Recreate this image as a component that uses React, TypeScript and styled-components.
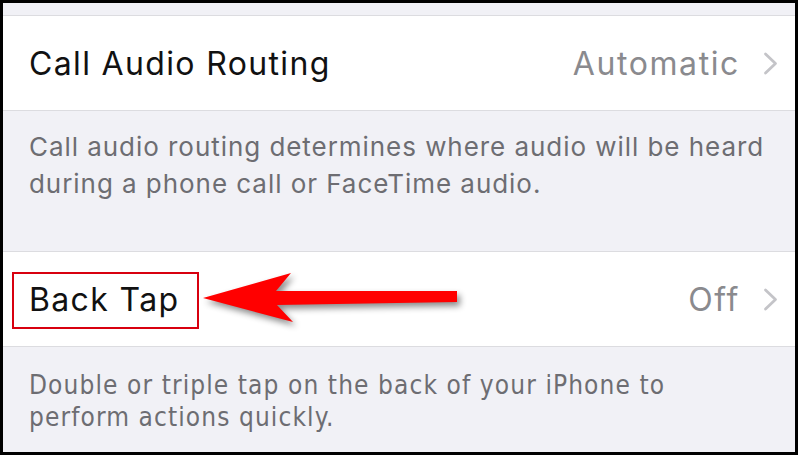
import React from 'react';
import styled, { createGlobalStyle } from 'styled-components';

const GlobalStyle = createGlobalStyle`
  html, body {
    margin: 0;
    padding: 0;
    background: #ffffff;
  }
  body {
    font-family: Inter, "Liberation Sans", sans-serif;
  }
`;

const Frame = styled.div`
  box-sizing: border-box;
  width: 798px;
  height: 455px;
  border: 3px solid #000;
  background: #f1f1f6;
  display: flex;
  flex-direction: column;
  overflow: hidden;
`;

const TopGap = styled.div`
  height: 12px;
  flex-shrink: 0;
`;

const Row = styled.div`
  position: relative;
  display: flex;
  align-items: center;
  height: 94px;
  flex-shrink: 0;
  padding: 0 17px 0 26px;
  background: #fff;
  border-top: 1px solid #dcdce0;
  border-bottom: 1px solid #dcdce0;
`;

const Label = styled.span`
  flex: 1;
  font-size: 32px;
  color: #111;
  letter-spacing: 1.35px;
`;

const Value = styled.span`
  font-size: 32px;
  color: #8a8a8e;
  letter-spacing: 1.6px;
  margin-right: 23px;
`;

const Footer = styled.div<{ narrow?: boolean }>`
  padding: ${p => (p.narrow ? '22px 10px 0 26px' : '17px 10px 0 26px')};
  height: ${p => (p.narrow ? 'auto' : '140px')};
  box-sizing: border-box;
  flex-shrink: 0;
  font-family: ${p => (p.narrow ? '"Liberation Sans Narrow", "DejaVu Sans Condensed", Roboto, sans-serif' : 'Inter, "Liberation Sans", sans-serif')};
  font-size: 26px;
  letter-spacing: ${p => (p.narrow ? '1.1px' : '0.95px')};
  line-height: ${p => (p.narrow ? '32px' : '37px')};
  color: #6d6d72;
`;

const Highlight = styled.div`
  position: absolute;
  left: 9px;
  top: 20px;
  width: 187px;
  height: 57px;
  box-sizing: border-box;
  border: 2px solid #d8000f;
  pointer-events: none;
`;

const Arrow = styled.svg`
  position: absolute;
  left: 187px;
  top: 7px;
  overflow: visible;
  filter: drop-shadow(3px 4px 3px rgba(0, 0, 0, 0.45));
`;

const Chevron = () => (
  <svg width="15" height="23" viewBox="0 0 15 23">
    <path d="M2.5 2 L12.5 11.5 L2.5 21" fill="none" stroke="#c4c4c8" strokeWidth="2.8" strokeLinecap="round" strokeLinejoin="round" />
  </svg>
);

export default function App() {
  return (
    <>
      <GlobalStyle />
      <Frame>
        <TopGap />
        <Row>
          <Label>Call Audio Routing</Label>
          <Value>Automatic</Value>
          <Chevron />
        </Row>
        <Footer>
          Call audio routing determines where audio will be heard
          <br />
          during a phone call or FaceTime audio.
        </Footer>
        <Row>
          <Label>Back Tap</Label>
          <Value>Off</Value>
          <Chevron />
          <Highlight />
          <Arrow width="280" height="80" viewBox="0 0 280 80">
            <polygon points="13,39 101,14 86,32 267,32 267,43 87,46 103,63" fill="#ff0000" />
          </Arrow>
        </Row>
        <Footer narrow>
          Double or triple tap on the back of your iPhone to
          <br />
          perform actions quickly.
        </Footer>
      </Frame>
    </>
  );
}
